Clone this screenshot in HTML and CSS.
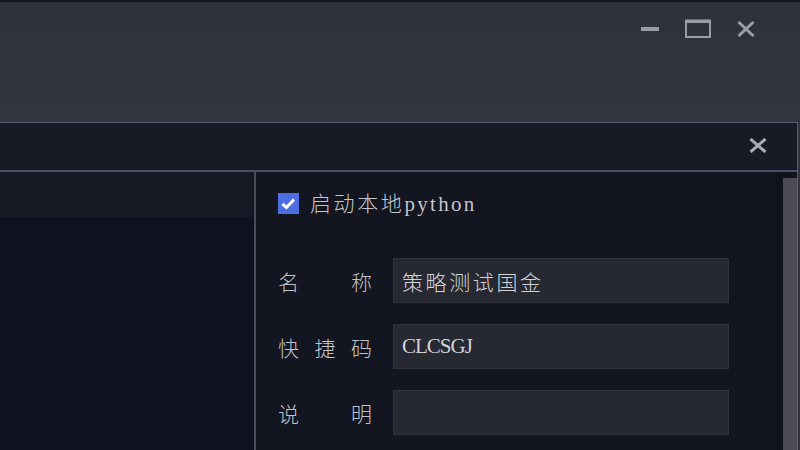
FILE: index.html
```html
<!DOCTYPE html>
<html lang="zh">
<head>
<meta charset="utf-8">
<title>策略</title>
<link rel="stylesheet" href="styles.css">
</head>
<body>
<div class="top">
  <div class="controls">
    <svg class="ctl-min" width="18" height="18" viewBox="0 0 18 18"><rect x="0" y="8" width="18" height="4" fill="#9b9ca4"/></svg>
    <svg class="ctl-max" width="26" height="19" viewBox="0 0 26 19"><rect x="1" y="1.5" width="24" height="16.5" fill="none" stroke="#9b9ca4" stroke-width="2"/><rect x="1" y="1" width="24" height="3" fill="#9b9ca4"/></svg>
    <svg class="ctl-close" width="18" height="16" viewBox="0 0 18 16"><path d="M1.5 1 L16.5 15 M16.5 1 L1.5 15" stroke="#9b9ca4" stroke-width="3"/></svg>
  </div>
</div>
<div class="dialog">
  <div class="dlg-title">
    <svg class="dlg-close" width="18" height="15" viewBox="0 0 18 15"><path d="M1.5 1 L16.5 14 M16.5 1 L1.5 14" stroke="#a8aab5" stroke-width="3"/></svg>
  </div>
  <div class="dlg-body">
    <div class="left">
      <div class="left-head"></div>
      <div class="left-list"></div>
    </div>
    <div class="divider"></div>
    <div class="right">
      <div class="content">
        <label class="check-row">
          <span class="checkbox"><svg width="21" height="21" viewBox="0 0 21 21"><path d="M4.5 11 L8.5 14.5 L16 6.5" fill="none" stroke="#ffffff" stroke-width="3"/></svg></span>
          <span class="check-text"><span class="cjk">启动本地</span><span class="latin latin-wide">python</span></span>
        </label>
        <div class="form">
          <div class="lbl"><span>名</span><span>称</span></div>
          <div class="field"><span class="cjk">策略测试国金</span></div>
          <div class="lbl"><span>快</span><span>捷</span><span>码</span></div>
          <div class="field"><span class="latin latin-tight">CLCSGJ</span></div>
          <div class="lbl"><span>说</span><span>明</span></div>
          <div class="field"></div>
        </div>
      </div>
      <div class="gutter"><div class="thumb"></div></div>
    </div>
  </div>
</div>
</body>
</html>
```

FILE: styles.css
```css
html, body {
  margin: 0;
  padding: 0;
}
body {
  width: 800px;
  height: 450px;
  overflow: hidden;
  background: #30333e;
  font-family: "Liberation Serif", "Noto Sans CJK SC", serif;
  color: #c3c5cc;
}
.top {
  height: 120px;
  border-top: 2px solid #14151a;
  background: linear-gradient(#2e313b, #33363f);
}
.controls {
  display: flex;
  justify-content: flex-end;
  align-items: center;
  gap: 26px;
  padding: 17px 45px 0 0;
}
.ctl-min { margin-top: -1px; }
.ctl-close { margin-top: 1px; }
.dialog {
  width: 797px;
  height: 327px;
  border-top: 1px solid #5a5f79;
  border-right: 1px solid #5a5f79;
  background: #141622;
  display: flex;
  flex-direction: column;
}
.dlg-title {
  height: 47px;
  border-bottom: 2px solid #4a4f65;
  background: #181a26;
  display: flex;
  justify-content: flex-end;
  align-items: flex-start;
  padding-right: 30px;
}
.dlg-close { margin-top: 15px; }
.dlg-body {
  flex: 1;
  display: flex;
  min-height: 0;
}
.left {
  width: 254px;
  display: flex;
  flex-direction: column;
}
.left-head {
  height: 46px;
  background: #161824;
}
.left-list {
  flex: 1;
  background: #0f111f;
}
.divider {
  width: 2px;
  background: #4a4d5b;
}
.right {
  flex: 1;
  display: flex;
  background: #131520;
}
.content {
  flex: 1;
  padding: 20px 0 0 22px;
}
.gutter {
  width: 21px;
  background: #10121c;
  display: flex;
  justify-content: flex-end;
  padding-top: 6px;
  box-sizing: border-box;
}
.thumb {
  width: 14px;
  height: 100%;
  background: #4b4c53;
}
.check-row {
  display: flex;
  align-items: center;
  height: 22px;
}
.checkbox {
  width: 21px;
  height: 21px;
  background: #4c6ee0;
  display: block;
}
.checkbox svg { display: block; }
.check-text {
  margin-left: 11px;
  display: flex;
  align-items: baseline;
  margin-top: -2px;
}
.cjk {
  font-family: "Noto Sans CJK SC", sans-serif;
  font-size: 21px;
  letter-spacing: 2.6px;
  font-weight: 300;
}
.latin {
  font-family: "Liberation Serif", serif;
  font-size: 21px;
}
.latin-wide {
  letter-spacing: 2.3px;
}
.latin-tight {
  letter-spacing: -1px;
}
.form {
  margin-top: 44px;
  display: grid;
  grid-template-columns: 94px 336px;
  grid-auto-rows: 45px;
  column-gap: 21px;
  row-gap: 21px;
}
.lbl {
  display: flex;
  justify-content: space-between;
  align-items: center;
  font-family: "Noto Sans CJK SC", sans-serif;
  font-size: 21px;
  font-weight: 300;
  color: #c0c2c9;
}
.field {
  box-sizing: border-box;
  background: #262832;
  border: 1px solid #31333c;
  padding-left: 8px;
  display: flex;
  align-items: center;
  color: #d2d3d8;
}
```
